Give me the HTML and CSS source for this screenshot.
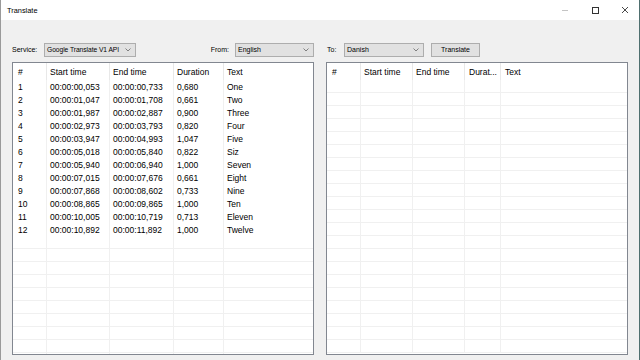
FILE: index.html
```html
<!DOCTYPE html>
<html>
<head>
<meta charset="utf-8">
<link rel="stylesheet" href="styles.css">
</head>
<body>
<div class="window">
  <div class="titlebar">
    <span class="title">Translate</span>
    <div class="caps">
      <span class="cap"><svg width="8" height="8" viewBox="0 0 8 8"><line x1="1" y1="4.5" x2="7" y2="4.5" stroke="#c4c4c4" stroke-width="1"/></svg></span>
      <span class="cap"><svg width="8" height="8" viewBox="0 0 8 8"><rect x="1.5" y="1.5" width="6" height="6" fill="none" stroke="#333" stroke-width="1"/></svg></span>
      <span class="cap"><svg width="8" height="8" viewBox="0 0 8 8"><path d="M1 1 L7 7 M7 1 L1 7" stroke="#333" stroke-width="0.9"/></svg></span>
    </div>
  </div>
  <div class="content">
    <div class="pane">
      <div class="toolbar">
        <span class="label lbl-service">Service:</span>
        <div class="combo combo-service"><span>Google Translate V1 API</span><svg class="chev" width="6" height="4" viewBox="0 0 6 4"><path d="M0.5 0.5 L3 3 L5.5 0.5" fill="none" stroke="#666" stroke-width="0.8"/></svg></div>
        <span class="spacer"></span>
        <span class="label lbl-from">From:</span>
        <div class="combo combo-from"><span>English</span><svg class="chev" width="6" height="4" viewBox="0 0 6 4"><path d="M0.5 0.5 L3 3 L5.5 0.5" fill="none" stroke="#666" stroke-width="0.8"/></svg></div>
      </div>
      <div class="list list-left">
        <div class="row head"><div>#</div><div>Start time</div><div>End time</div><div>Duration</div><div>Text</div></div>
        <div class="row data"><div>1</div><div>00:00:00,053</div><div>00:00:00,733</div><div>0,680</div><div>One</div></div>
        <div class="row data"><div>2</div><div>00:00:01,047</div><div>00:00:01,708</div><div>0,661</div><div>Two</div></div>
        <div class="row data"><div>3</div><div>00:00:01,987</div><div>00:00:02,887</div><div>0,900</div><div>Three</div></div>
        <div class="row data"><div>4</div><div>00:00:02,973</div><div>00:00:03,793</div><div>0,820</div><div>Four</div></div>
        <div class="row data"><div>5</div><div>00:00:03,947</div><div>00:00:04,993</div><div>1,047</div><div>Five</div></div>
        <div class="row data"><div>6</div><div>00:00:05,018</div><div>00:00:05,840</div><div>0,822</div><div>Siz</div></div>
        <div class="row data"><div>7</div><div>00:00:05,940</div><div>00:00:06,940</div><div>1,000</div><div>Seven</div></div>
        <div class="row data"><div>8</div><div>00:00:07,015</div><div>00:00:07,676</div><div>0,661</div><div>Eight</div></div>
        <div class="row data"><div>9</div><div>00:00:07,868</div><div>00:00:08,602</div><div>0,733</div><div>Nine</div></div>
        <div class="row data"><div>10</div><div>00:00:08,865</div><div>00:00:09,865</div><div>1,000</div><div>Ten</div></div>
        <div class="row data"><div>11</div><div>00:00:10,005</div><div>00:00:10,719</div><div>0,713</div><div>Eleven</div></div>
        <div class="row data"><div>12</div><div>00:00:10,892</div><div>00:00:11,892</div><div>1,000</div><div>Twelve</div></div>
        <div class="row fill"><div></div><div></div><div></div><div></div><div></div></div>
        <div class="row fill"><div></div><div></div><div></div><div></div><div></div></div>
        <div class="row fill"><div></div><div></div><div></div><div></div><div></div></div>
        <div class="row fill"><div></div><div></div><div></div><div></div><div></div></div>
        <div class="row fill"><div></div><div></div><div></div><div></div><div></div></div>
        <div class="row fill"><div></div><div></div><div></div><div></div><div></div></div>
        <div class="row fill"><div></div><div></div><div></div><div></div><div></div></div>
        <div class="row fill"><div></div><div></div><div></div><div></div><div></div></div>
        <div class="row fill"><div></div><div></div><div></div><div></div><div></div></div>
        <div class="row fill"><div></div><div></div><div></div><div></div><div></div></div>
      </div>
    </div>
    <div class="pane">
      <div class="toolbar">
        <span class="label lbl-to">To:</span>
        <div class="combo combo-to"><span>Danish</span><svg class="chev" width="6" height="4" viewBox="0 0 6 4"><path d="M0.5 0.5 L3 3 L5.5 0.5" fill="none" stroke="#666" stroke-width="0.8"/></svg></div>
        <div class="button">Translate</div>
      </div>
      <div class="list list-right">
        <div class="row head"><div>#</div><div>Start time</div><div>End time</div><div>Durat...</div><div>Text</div></div>
        <div class="row fill"><div></div><div></div><div></div><div></div><div></div></div>
        <div class="row fill"><div></div><div></div><div></div><div></div><div></div></div>
        <div class="row fill"><div></div><div></div><div></div><div></div><div></div></div>
        <div class="row fill"><div></div><div></div><div></div><div></div><div></div></div>
        <div class="row fill"><div></div><div></div><div></div><div></div><div></div></div>
        <div class="row fill"><div></div><div></div><div></div><div></div><div></div></div>
        <div class="row fill"><div></div><div></div><div></div><div></div><div></div></div>
        <div class="row fill"><div></div><div></div><div></div><div></div><div></div></div>
        <div class="row fill"><div></div><div></div><div></div><div></div><div></div></div>
        <div class="row fill"><div></div><div></div><div></div><div></div><div></div></div>
        <div class="row fill"><div></div><div></div><div></div><div></div><div></div></div>
        <div class="row fill"><div></div><div></div><div></div><div></div><div></div></div>
        <div class="row fill"><div></div><div></div><div></div><div></div><div></div></div>
        <div class="row fill"><div></div><div></div><div></div><div></div><div></div></div>
        <div class="row fill"><div></div><div></div><div></div><div></div><div></div></div>
        <div class="row fill"><div></div><div></div><div></div><div></div><div></div></div>
        <div class="row fill"><div></div><div></div><div></div><div></div><div></div></div>
        <div class="row fill"><div></div><div></div><div></div><div></div><div></div></div>
        <div class="row fill"><div></div><div></div><div></div><div></div><div></div></div>
        <div class="row fill"><div></div><div></div><div></div><div></div><div></div></div>
        <div class="row fill"><div></div><div></div><div></div><div></div><div></div></div>
      </div>
    </div>
  </div>
</div>
</body>
</html>
```

FILE: styles.css
```css
* { box-sizing: border-box; }
html, body { margin: 0; padding: 0; }
body {
  width: 640px;
  height: 360px;
  overflow: hidden;
  font-family: "Liberation Sans", Arial, sans-serif;
  color: #000;
}
.window {
  width: 640px;
  height: 360px;
  display: flex;
  flex-direction: column;
  border-left: 1px solid #9a9a9a;
  border-right: 1px solid #4f6f6f;
  background: #f0f0f0;
}
.titlebar {
  height: 20px;
  flex: none;
  background: #fff;
  display: flex;
  align-items: center;
  padding-left: 6px;
}
.title {
  font-size: 7.4px;
  color: #000;
}
.caps {
  margin-left: auto;
  display: flex;
  height: 20px;
}
.cap {
  width: 30px;
  height: 20px;
  display: flex;
  align-items: center;
  justify-content: center;
}
.cap:last-child { width: 29px; }
.content {
  flex: 1;
  min-height: 0;
  display: flex;
  gap: 12px;
  padding: 22px 11px 5px 11px;
}
.pane {
  width: 302px;
  min-height: 0;
  display: flex;
  flex-direction: column;
  gap: 5px;
}
.toolbar {
  height: 15px;
  flex: none;
  display: flex;
  align-items: center;
  font-size: 7px;
}
.label { white-space: nowrap; }
.lbl-service { width: 32px; }
.lbl-from { margin-right: 6px; }
.lbl-to { width: 17px; margin-left: 1px; }
.spacer { flex: 1; }
.combo {
  height: 14px;
  background: #e1e1e1;
  border: 1px solid #adadad;
  display: flex;
  align-items: center;
  padding-left: 2px;
  padding-right: 4px;
  white-space: nowrap;
}
.combo .chev { margin-left: auto; flex: none; }
.combo-service { width: 92px; font-size: 6.7px; letter-spacing: -0.05px; }
.combo-from { width: 79px; }
.combo-to { width: 80px; }
.button {
  margin-left: 7px;
  width: 49px;
  height: 14px;
  background: #e1e1e1;
  border: 1px solid #adadad;
  display: flex;
  align-items: center;
  justify-content: center;
}
.list {
  flex: 1;
  min-height: 0;
  background: #fff;
  border: 1px solid #828790;
  overflow: hidden;
  font-size: 8.5px;
}
.row {
  display: grid;
  height: 13px;
  align-items: stretch;
}
.list-left .row { grid-template-columns: 33px 63px 64px 50px 1fr; }
.list-right .row { grid-template-columns: 33px 52px 52px 36px 1fr; }
.row > div {
  display: flex;
  align-items: center;
  padding-left: 3px;
  white-space: nowrap;
  overflow: hidden;
  border-left: 1px solid #f0f0f0;
}
.row > div:first-child {
  border-left: none;
  padding-left: 5px;
}
.list-right .row > div:nth-child(4),
.list-right .row > div:nth-child(5) { padding-left: 4px; }
.row.head { height: 17px; }
.row.head > div { border-left-color: #e8e8e8; }
.row.fill { border-bottom: 1px solid #f0f0f0; }
```
